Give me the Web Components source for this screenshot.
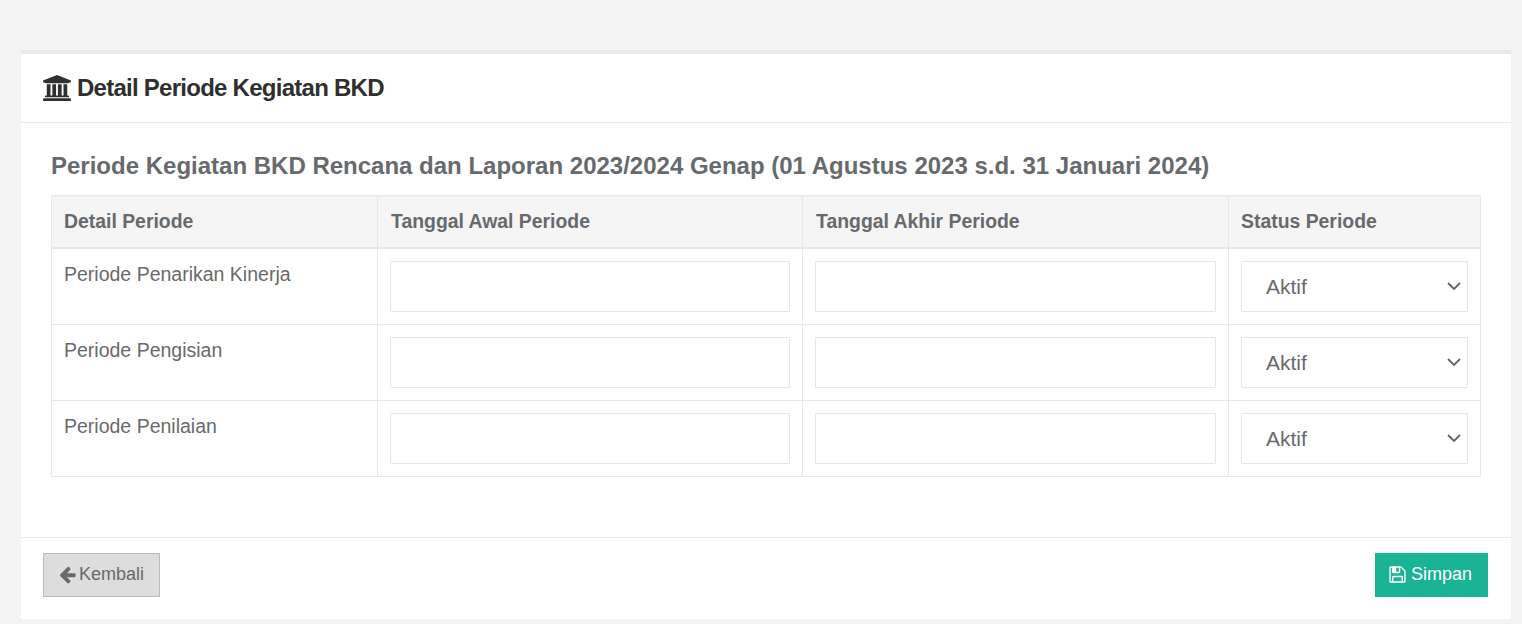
<!DOCTYPE html>
<html>
<head>
<meta charset="utf-8">
<title>Detail Periode Kegiatan BKD</title>
<style>
    html, body { margin: 0; height: 100%; }
    body { background: #f3f3f4; font-family: "Liberation Sans", Arial, sans-serif; color: #676a6c; overflow: hidden; }
</style>
</head>
<body>
<bkd-page>
    <bkd-card>
        <span slot="title">Detail Periode Kegiatan BKD</span>
        <bkd-table caption="Periode Kegiatan BKD Rencana dan Laporan 2023/2024 Genap (01 Agustus 2023 s.d. 31 Januari 2024)">
            <bkd-row label="Periode Penarikan Kinerja"></bkd-row>
            <bkd-row label="Periode Pengisian"></bkd-row>
            <bkd-row label="Periode Penilaian"></bkd-row>
        </bkd-table>
        <bkd-button slot="footer" icon="back">Kembali</bkd-button>
        <bkd-button slot="footer" icon="save" kind="primary">Simpan</bkd-button>
    </bkd-card>
</bkd-page>

<script>
const COLS = "326px 425px 426px 1fr";

class BkdPage extends HTMLElement {
    constructor() {
        super();
        this.attachShadow({ mode: "open" });
        this.shadowRoot.innerHTML = `
            <style>
                :host { display: block; padding: 50px 11px 5px 21px; }
            </style>
            <slot></slot>
        `;
    }
}

class BkdCard extends HTMLElement {
    constructor() {
        super();
        this.attachShadow({ mode: "open" });
        this.shadowRoot.innerHTML = `
            <style>
                :host { display: block; background: #fff; border-top: 4px solid #e7eaec; }
                header { height: 69px; box-sizing: border-box; border-bottom: 1px solid #e7eaec; padding: 0 22px 1px; display: flex; align-items: center; gap: 6px; color: #2f2f2f; font-size: 24px; font-weight: bold; letter-spacing: -0.74px; }
                svg { width: 28px; height: 26px; fill: currentColor; flex: none; }
                main { height: 414px; box-sizing: border-box; padding: 28px 30px 0; }
                footer { height: 82px; box-sizing: border-box; border-top: 1px solid #e7eaec; padding: 15px 23px 0 22px; display: flex; justify-content: space-between; align-items: flex-start; }
            </style>
            <header>
                <svg viewBox="0 0 1920 1792"><path d="M960 0l960 384v128h-128q0 26-20.500 45t-48.500 19h-1526q-28 0-48.500-19t-20.500-45h-128v-128zm-704 640h256v768h128v-768h256v768h128v-768h256v768h128v-768h256v768h59q28 0 48.500 19t20.500 45v64h-1664v-64q0-26 20.500-45t48.500-19h59v-768zm1595 960q28 0 48.500 19t20.500 45v128h-1920v-128q0-26 20.500-45t48.500-19h1782z"/></svg>
                <slot name="title"></slot>
            </header>
            <main><slot></slot></main>
            <footer><slot name="footer"></slot></footer>
        `;
    }
}

class BkdTable extends HTMLElement {
    constructor() {
        super();
        this.attachShadow({ mode: "open" });
        this.shadowRoot.innerHTML = `
            <style>
                :host { display: block; }
                h3 { margin: 0 0 15px; font-size: 24px; line-height: 29px; font-weight: bold; color: #676a6c; white-space: nowrap; }
                .frame { border: 1px solid #e7e7e7; border-bottom: 0; width: 1430px; box-sizing: border-box; }
                .head { display: grid; grid-template-columns: ${COLS}; height: 53px; box-sizing: border-box; background: #f5f5f6; border-bottom: 2px solid #e7e7e7; font-size: 19.4px; font-weight: bold; }
                .head div { padding: 0 12px 0 13px; line-height: 50px; border-right: 1px solid #e7e7e7; white-space: nowrap; }
                .head div:first-child, .head div:last-child { padding-left: 12px; }
                .head div:last-child { border-right: 0; }
            </style>
            <h3></h3>
            <div class="frame">
                <div class="head">
                    <div>Detail Periode</div>
                    <div>Tanggal Awal Periode</div>
                    <div>Tanggal Akhir Periode</div>
                    <div>Status Periode</div>
                </div>
                <slot></slot>
            </div>
        `;
        this.shadowRoot.querySelector("h3").innerText = this.getAttribute("caption");
    }
}

class BkdRow extends HTMLElement {
    constructor() {
        super();
        this.attachShadow({ mode: "open" });
        this.shadowRoot.innerHTML = `
            <style>
                :host { display: grid; grid-template-columns: ${COLS}; height: 76px; box-sizing: border-box; border-bottom: 1px solid #e7e7e7; font-size: 19.5px; }
                .cell { padding: 12px 12px 0; border-right: 1px solid #e7e7e7; box-sizing: border-box; }
                .cell:last-child { border-right: 0; }
                .label { line-height: 26px; white-space: nowrap; }
                .pick { position: relative; }
                input, select { display: block; width: 100%; height: 51px; box-sizing: border-box; border: 1px solid #e5e6e7; border-radius: 1px; background: #fff; font: 21px "Liberation Sans", Arial, sans-serif; color: #676a6c; outline: none; }
                select { appearance: none; -webkit-appearance: none; padding: 0 32px 0 24px; }
                .chev { position: absolute; right: 7px; top: 21px; width: 14px; height: 8px; fill: none; stroke: #666; stroke-width: 1.8; pointer-events: none; }
            </style>
            <div class="cell label"></div>
            <div class="cell"><input type="text"></div>
            <div class="cell"><input type="text"></div>
            <div class="cell"><div class="pick"><select><option>Aktif</option><option>Tidak Aktif</option></select>
                <svg class="chev" viewBox="0 0 14 8"><path d="M1 1l6 6 6-6"/></svg></div></div>
        `;
        this.shadowRoot.querySelector(".label").innerText = this.getAttribute("label");
    }
}

const ICONS = {
    back: `<svg viewBox="0 0 1792 1792"><path d="M1664 896v128q0 53-32.500 90.500t-84.500 37.500h-704l293 294q38 36 38 90t-38 90l-75 76q-37 37-90 37-52 0-91-37l-651-652q-37-37-37-90 0-52 37-91l651-650q38-38 91-38 52 0 90 38l75 74q38 38 38 91t-38 91l-293 293h704q52 0 84.500 37.500t32.500 90.500z"/></svg>`,
    save: `<svg viewBox="0 0 1792 1792"><path d="M512 1536h768v-384h-768v384zm896 0h128v-896q0-14-10-38.500t-20-34.500l-281-281q-10-10-34-20t-39-10v416q0 40-28 68t-68 28h-576q-40 0-68-28t-28-68v-416h-128v1280h128v-416q0-40 28-68t68-28h832q40 0 68 28t28 68v416zm-384-928v-320q0-13-9.500-22.500t-22.500-9.500h-192q-13 0-22.500 9.500t-9.500 22.500v320q0 13 9.500 22.500t22.500 9.500h192q13 0 22.500-9.500t9.500-22.500zm640 32v928q0 40-28 68t-68 28h-1344q-40 0-68-28t-28-68v-1344q0-40 28-68t68-28h928q40 0 88 20t76 48l280 280q28 28 48 76t20 88z"/></svg>`
};

class BkdButton extends HTMLElement {
    constructor() {
        super();
        this.attachShadow({ mode: "open" });
        this.shadowRoot.innerHTML = `
            <style>
                :host { display: inline-flex; align-items: center; gap: 2px; height: 44px; box-sizing: border-box; padding: 0 15px 2px 14px; background: #dddddd; border: 1px solid #bbb; color: #676a6c; font-size: 18px; cursor: pointer; }
                :host([kind="primary"]) { background: #1ab394; border-color: #1ab394; color: #fff; gap: 4px; padding-left: 12px; }
                svg { width: 19px; height: 19px; fill: currentColor; flex: none; }
            </style>
            ${ICONS[this.getAttribute("icon")]}
            <slot></slot>
        `;
    }
}

customElements.define("bkd-page", BkdPage);
customElements.define("bkd-card", BkdCard);
customElements.define("bkd-table", BkdTable);
customElements.define("bkd-row", BkdRow);
customElements.define("bkd-button", BkdButton);
</script>
</body>
</html>
